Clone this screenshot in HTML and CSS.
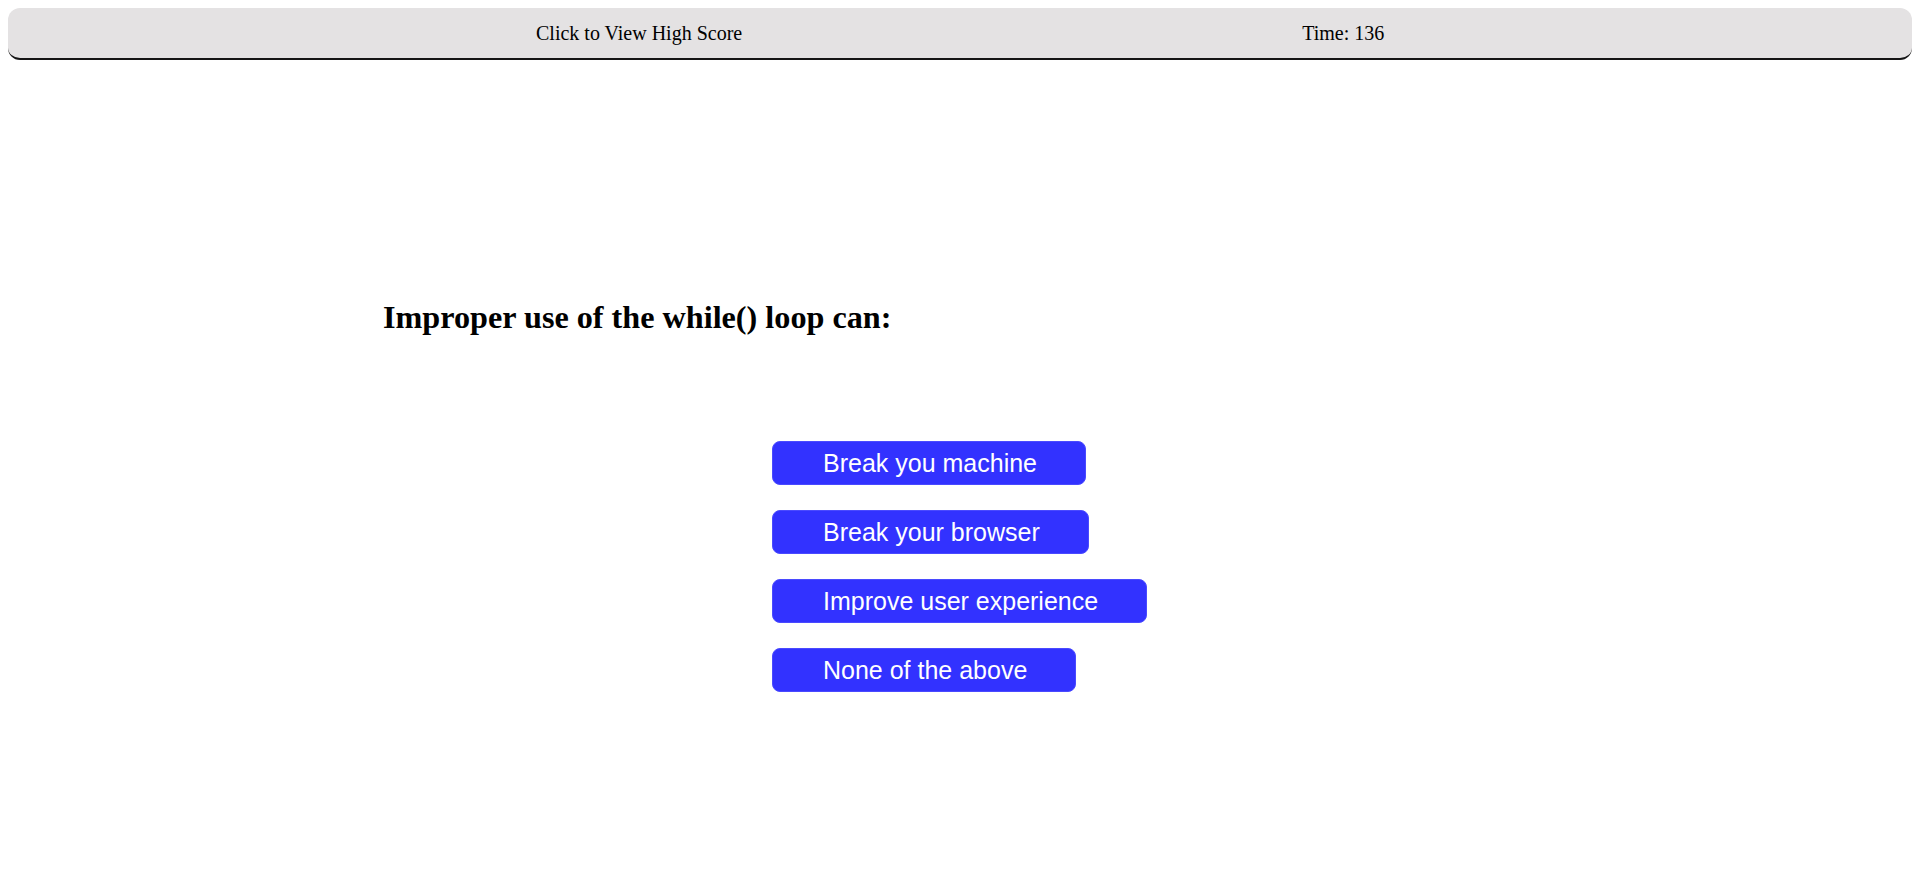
FILE: index.html
```html
<!DOCTYPE html>
<html>
<head>
<meta charset="utf-8">
<title>Quiz</title>
<link rel="stylesheet" href="styles.css">
</head>
<body>
<header class="topbar">
  <a class="highscore">Click to View High Score</a>
  <span class="timer">Time: 136</span>
</header>
<main class="quiz">
  <h2 class="question">Improper use of the while() loop can:</h2>
  <div class="answers">
    <button class="answer">Break you machine</button>
    <button class="answer">Break your browser</button>
    <button class="answer">Improve user experience</button>
    <button class="answer">None of the above</button>
  </div>
</main>
</body>
</html>
```

FILE: styles.css
```css
html, body {
  margin: 0;
  padding: 0;
  background: #ffffff;
}

body {
  padding: 8px;
  font-family: "Liberation Serif", "Times New Roman", serif;
  color: #000;
}

.topbar {
  display: flex;
  align-items: center;
  box-sizing: border-box;
  height: 52px;
  padding-left: 528px;
  background: #e4e2e3;
  border-radius: 12px;
  border-bottom: 2px solid #151515;
  font-size: 20px;
}

.highscore {
  cursor: pointer;
}

.timer {
  margin-left: 560px;
}

.quiz {
  padding-left: 375px;
}

.question {
  margin: 240px 0 0 0;
  font-size: 32.2px;
  font-weight: bold;
  line-height: 34px;
}

.answers {
  display: flex;
  flex-direction: column;
  align-items: flex-start;
  gap: 25px;
  margin-top: 107px;
  padding-left: 389px;
}

.answer {
  box-sizing: border-box;
  height: 44px;
  padding: 0 48px 0 50px;
  border: 1px solid #4a4aff;
  border-radius: 8px;
  background: #3232ff;
  color: #ffffff;
  font-family: "Liberation Sans", Arial, sans-serif;
  font-size: 25px;
  line-height: 42px;
  cursor: pointer;
}
```
